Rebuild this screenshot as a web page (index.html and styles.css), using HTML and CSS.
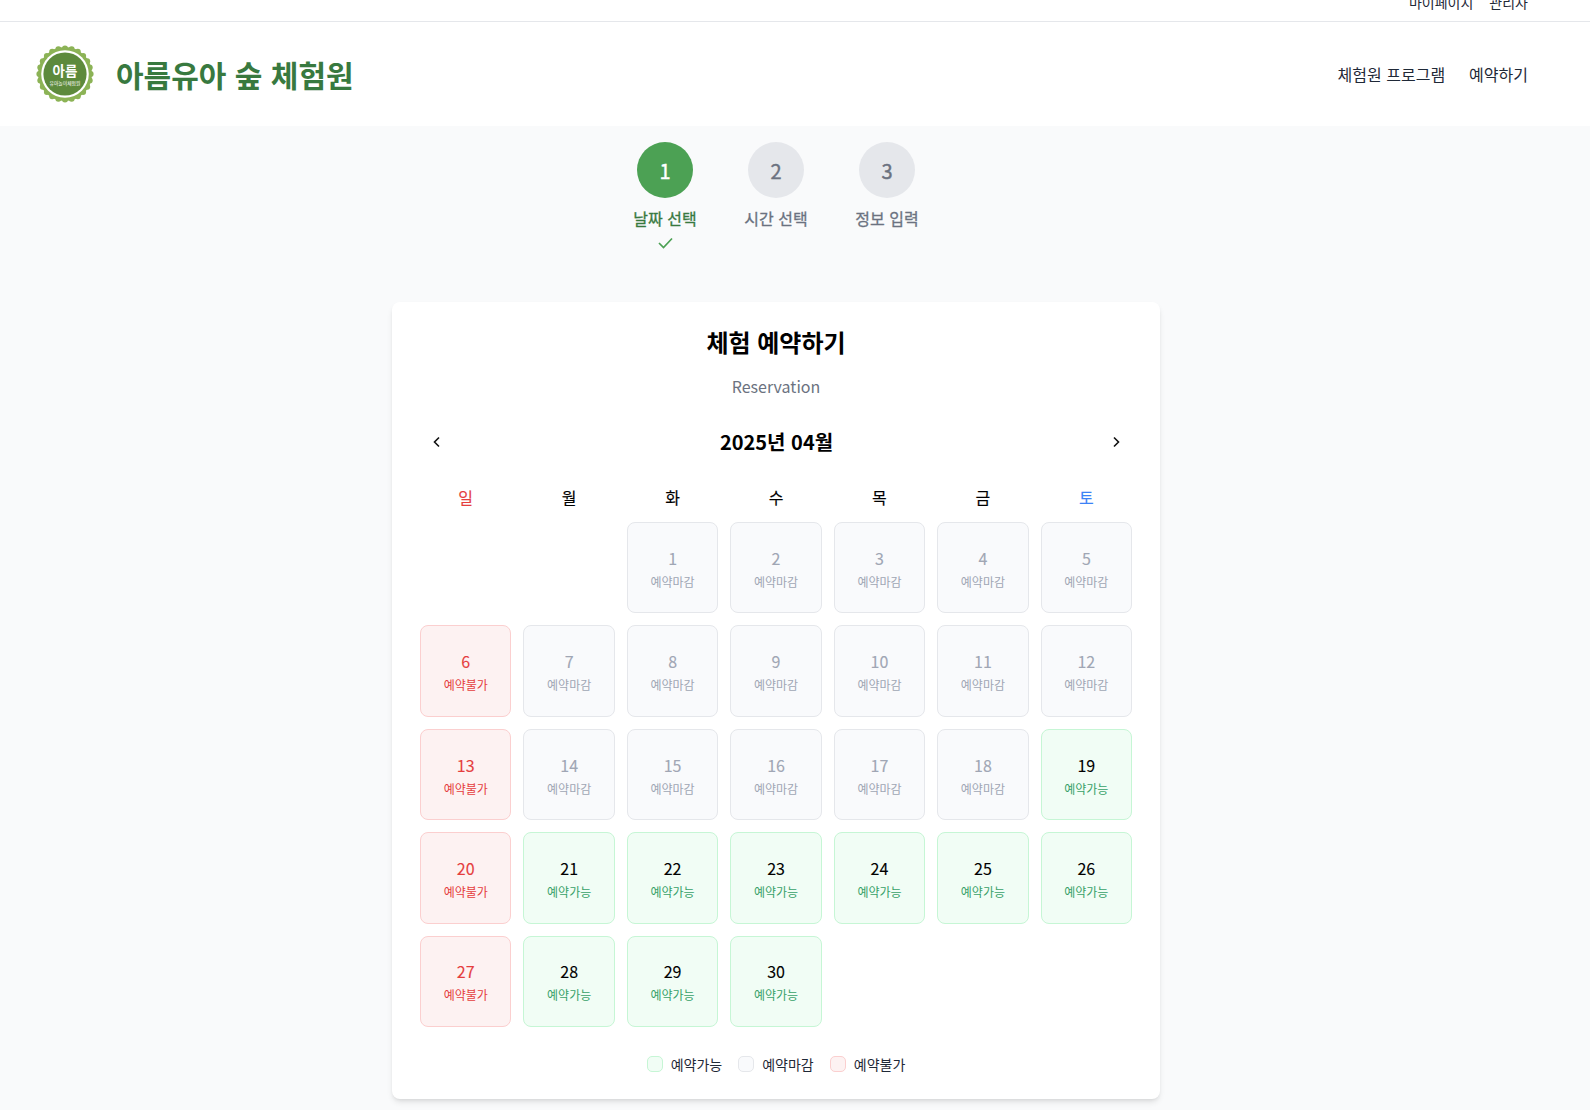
FILE: index.html
```html
<!DOCTYPE html>
<html lang="ko">
<head>
<meta charset="utf-8">
<title>아름유아 숲 체험원</title>
<link rel="stylesheet" href="styles.css">
</head>
<body>
<div class="topbar"><a>마이페이지</a><a>관리자</a></div>
<header class="header">
  <div class="brand">
    <svg class="logo" viewBox="0 0 58 58" width="58" height="58">
      <circle cx="29" cy="29" r="27" fill="#8cb356"/>
      <g fill="#8cb356">
        <circle cx="29" cy="3.400" r="3"/><circle cx="35.600" cy="4.300" r="3"/><circle cx="41.800" cy="6.800" r="3"/><circle cx="47.100" cy="10.900" r="3"/><circle cx="51.200" cy="16.200" r="3"/><circle cx="53.700" cy="22.400" r="3"/><circle cx="54.600" cy="29" r="3"/><circle cx="53.700" cy="35.600" r="3"/><circle cx="51.200" cy="41.800" r="3"/><circle cx="47.100" cy="47.100" r="3"/><circle cx="41.800" cy="51.200" r="3"/><circle cx="35.600" cy="53.700" r="3"/><circle cx="29" cy="54.600" r="3"/><circle cx="22.400" cy="53.700" r="3"/><circle cx="16.200" cy="51.200" r="3"/><circle cx="10.900" cy="47.100" r="3"/><circle cx="6.800" cy="41.800" r="3"/><circle cx="4.300" cy="35.600" r="3"/><circle cx="3.400" cy="29" r="3"/><circle cx="4.300" cy="22.400" r="3"/><circle cx="6.800" cy="16.200" r="3"/><circle cx="10.900" cy="10.900" r="3"/><circle cx="16.200" cy="6.800" r="3"/><circle cx="22.400" cy="4.300" r="3"/>
      </g>
      <circle cx="29" cy="29" r="23.800" fill="#fff"/>
      <circle cx="29" cy="29" r="21.600" fill="#5d8a3c"/>
      <text x="29" y="30.500" class="logo-big">아름</text>
      <text x="29" y="40" class="logo-small">유아놀이체험원</text>
    </svg>
    <h1 class="brand-name">아름유아 숲 체험원</h1>
  </div>
  <nav class="nav"><a>체험원 프로그램</a><a>예약하기</a></nav>
</header>
<main class="main">
  <div class="steps">
    <div class="step active">
      <div class="circle">1</div>
      <div class="step-label">날짜 선택</div>
      <svg class="check" viewBox="0 0 16 16" width="16" height="16"><path d="M2 8 6.500 12.500 15 3.500" fill="none" stroke="#4ca154" stroke-width="1.7"/></svg>
    </div>
    <div class="step"><div class="circle">2</div><div class="step-label">시간 선택</div></div>
    <div class="step"><div class="circle">3</div><div class="step-label">정보 입력</div></div>
  </div>
  <section class="card">
    <h2 class="title">체험 예약하기</h2>
    <p class="subtitle">Reservation</p>
    <div class="month-row">
      <svg class="chev" viewBox="0 0 16 16" width="16" height="16"><path d="M10 3.500 5.500 8 10 12.500" fill="none" stroke="#111" stroke-width="1.6"/></svg>
      <div class="month">2025년 04월</div>
      <svg class="chev" viewBox="0 0 16 16" width="16" height="16"><path d="M6 3.500 10.500 8 6 12.500" fill="none" stroke="#111" stroke-width="1.6"/></svg>
    </div>
    <div class="weekdays">
      <div class="sun">일</div><div>월</div><div>화</div><div>수</div><div>목</div><div>금</div><div class="sat">토</div>
    </div>
    <div class="days">
      <div class="blank"></div><div class="blank"></div>
      <div class="day closed"><b>1</b><span>예약마감</span></div>
      <div class="day closed"><b>2</b><span>예약마감</span></div>
      <div class="day closed"><b>3</b><span>예약마감</span></div>
      <div class="day closed"><b>4</b><span>예약마감</span></div>
      <div class="day closed"><b>5</b><span>예약마감</span></div>
      <div class="day no"><b>6</b><span>예약불가</span></div>
      <div class="day closed"><b>7</b><span>예약마감</span></div>
      <div class="day closed"><b>8</b><span>예약마감</span></div>
      <div class="day closed"><b>9</b><span>예약마감</span></div>
      <div class="day closed"><b>10</b><span>예약마감</span></div>
      <div class="day closed"><b>11</b><span>예약마감</span></div>
      <div class="day closed"><b>12</b><span>예약마감</span></div>
      <div class="day no"><b>13</b><span>예약불가</span></div>
      <div class="day closed"><b>14</b><span>예약마감</span></div>
      <div class="day closed"><b>15</b><span>예약마감</span></div>
      <div class="day closed"><b>16</b><span>예약마감</span></div>
      <div class="day closed"><b>17</b><span>예약마감</span></div>
      <div class="day closed"><b>18</b><span>예약마감</span></div>
      <div class="day ok"><b>19</b><span>예약가능</span></div>
      <div class="day no"><b>20</b><span>예약불가</span></div>
      <div class="day ok"><b>21</b><span>예약가능</span></div>
      <div class="day ok"><b>22</b><span>예약가능</span></div>
      <div class="day ok"><b>23</b><span>예약가능</span></div>
      <div class="day ok"><b>24</b><span>예약가능</span></div>
      <div class="day ok"><b>25</b><span>예약가능</span></div>
      <div class="day ok"><b>26</b><span>예약가능</span></div>
      <div class="day no"><b>27</b><span>예약불가</span></div>
      <div class="day ok"><b>28</b><span>예약가능</span></div>
      <div class="day ok"><b>29</b><span>예약가능</span></div>
      <div class="day ok"><b>30</b><span>예약가능</span></div>
    </div>
    <div class="legend">
      <div class="legend-item"><i class="swatch ok"></i>예약가능</div>
      <div class="legend-item"><i class="swatch closed"></i>예약마감</div>
      <div class="legend-item"><i class="swatch no"></i>예약불가</div>
    </div>
  </section>
</main>
</body>
</html>
```
FILE: styles.css
```css
* { box-sizing: border-box; }
html, body { margin: 0; padding: 0; }
body {
  height: 1110px;
  overflow: hidden;
  background: #f9fafb;
  font-family: "Noto Sans CJK KR", "Noto Sans", sans-serif;
  color: #000;
}
.topbar {
  height: 22px;
  background: #fff;
  border-bottom: 1px solid #e5e7eb;
  display: flex;
  justify-content: flex-end;
  align-items: flex-end;
  gap: 16px;
  padding: 0 62px 9px 0;
  overflow: hidden;
  font-size: 14px;
  line-height: 20px;
  color: #1f2937;
}
.header {
  height: 104px;
  background: #fff;
  display: flex;
  justify-content: space-between;
  align-items: center;
  padding: 0 62px 1px 36px;
}
.brand { display: flex; align-items: center; gap: 22px; }
.logo { display: block; }
.logo-big { font-size: 13.500px; font-weight: 700; fill: #fff; text-anchor: middle; }
.logo-small { font-size: 4.800px; fill: #fff; text-anchor: middle; }
.brand-name { margin: 0; font-size: 30px; line-height: 40px; font-weight: 700; color: #38793f; }
.nav { display: flex; gap: 24px; font-size: 16px; line-height: 24px; color: #1f2937; }
.main { width: 1552px; display: flex; flex-direction: column; align-items: center; }
.steps { display: flex; justify-content: center; gap: 48px; padding-top: 16px; height: 176px; }
.step { display: flex; flex-direction: column; align-items: center; width: 63px; }
.circle {
  width: 56px; height: 56px; border-radius: 50%;
  background: #e5e7eb; color: #6b7280;
  display: flex; align-items: center; justify-content: center;
  font-size: 20px; font-weight: 400; -webkit-text-stroke: .4px currentColor; flex: none;
}
.step-label { margin-top: 8px; font-size: 16px; line-height: 24px; -webkit-text-stroke: .3px currentColor; color: #6b7280; white-space: nowrap; }
.step.active .circle { background: #4ca154; color: #fff; }
.step.active .step-label { color: #38793f; }
.check { margin-top: 5px; }
.card {
  width: 768px;
  height: 797px;
  background: #fff;
  border-radius: 8px;
  box-shadow: 0 4px 6px -1px rgba(0,0,0,.1), 0 2px 4px -2px rgba(0,0,0,.1);
  padding: 24px 28px;
}
.title { margin: 0; text-align: center; font-size: 24px; line-height: 32px; font-weight: 700; }
.subtitle { margin: 16px 0 0; text-align: center; font-size: 16px; line-height: 24px; color: #6b7280; }
.month-row { display: flex; align-items: center; justify-content: space-between; margin-top: 28px; padding: 0 8px 0 9px; height: 32px; }
.month { font-size: 20px; line-height: 28px; font-weight: 700; }
.chev { display: block; }
.weekdays { display: grid; grid-template-columns: repeat(7, 1fr); gap: 12px; margin-top: 27px; text-align: center; font-size: 16px; line-height: 24px; -webkit-text-stroke: .15px currentColor; }
.sun { color: #e53e3e; }
.sat { color: #3b82f6; }
.days { display: grid; grid-template-columns: repeat(7, 1fr); gap: 12px; margin-top: 13px; }
.blank { aspect-ratio: 1; }
.swatch { width: 16px; height: 16px; border: 1px solid; border-radius: 5px; display: block; }
.day {
  aspect-ratio: 1;
  border: 1px solid;
  border-radius: 8px;
  padding-bottom: 2px;
  display: flex; flex-direction: column; align-items: center; justify-content: center;
}
.day b { font-size: 16px; line-height: 28px; font-weight: 400; -webkit-text-stroke: .1px currentColor; }
.day span { margin-top: 2px; font-size: 12px; line-height: 16px; }
.closed { background: #f9fafc; border-color: #e5e7eb; color: #a0a6b4; }
.ok { background: #f1fdf5; border-color: #c6f6d5; color: #38a169; }
.ok b { color: #000; }
.no { background: #fdf2f2; border-color: #fbcfcf; color: #e53e3e; }
.legend { display: flex; justify-content: center; gap: 16px; margin-top: 27px; font-size: 14px; line-height: 20px; color: #1f2937; }
.legend-item { display: flex; align-items: center; gap: 8px; }
```
